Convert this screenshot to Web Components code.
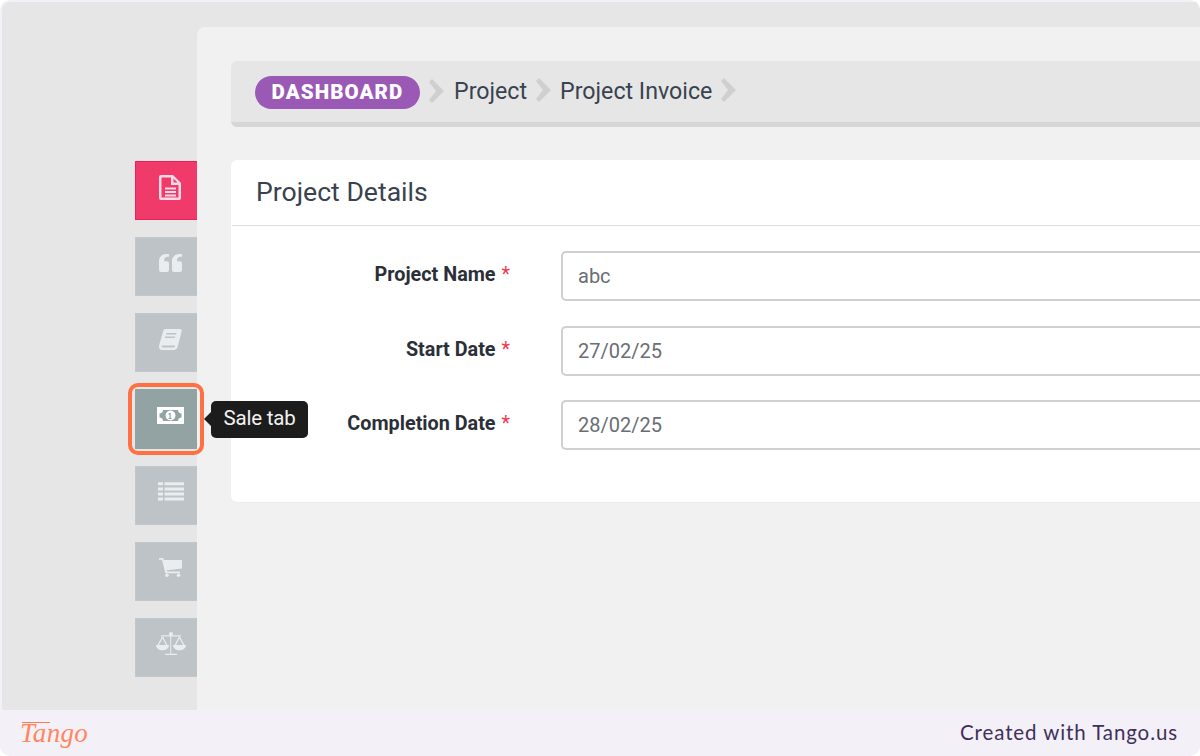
<!doctype html>
<html lang="en">
<head>
<meta charset="utf-8">
<title>Project Invoice</title>
<style>
  html, body { margin: 0; background: #fff; }
</style>
</head>
<body>
<tango-shot>
  <side-rail slot="rail">
    <side-tab icon="file" tone="red"></side-tab>
    <side-tab icon="quote"></side-tab>
    <side-tab icon="book"></side-tab>
    <side-tab icon="money" tone="active" tip="Sale tab"></side-tab>
    <side-tab icon="list"></side-tab>
    <side-tab icon="cart"></side-tab>
    <side-tab icon="scale"></side-tab>
  </side-rail>
  <crumb-bar slot="main">
    <span slot="pill">DASHBOARD</span>
    <crumb-item>Project</crumb-item>
    <crumb-item>Project Invoice</crumb-item>
  </crumb-bar>
  <form-card slot="main" heading="Project Details">
    <form-row label="Project Name" value="abc"></form-row>
    <form-row label="Start Date" value="27/02/25"></form-row>
    <form-row label="Completion Date" value="28/02/25"></form-row>
  </form-card>
</tango-shot>

<script>
const ICONS = {
  file: `<svg width="23" height="25" viewBox="0 0 23 25"><path fill-rule="evenodd" d="M2 0h12l8 8v15a2 2 0 0 1-2 2H2a2 2 0 0 1-2-2V2a2 2 0 0 1 2-2zM2.500 2.500v20h17V10h-7.500V2.500zM14.500 3.500v4h4zM6 12.500h11v2H6zM6 16h11v2H6zM6 19.500h11v2H6z"/></svg>`,
  quote: `<svg width="23" height="18" viewBox="0 2 23 16" preserveAspectRatio="none"><path d="M10 2v2.500H8.500C6.800 4.500 5 5.800 5 7.800V8.500h3a2 2 0 0 1 2 2V16a2 2 0 0 1-2 2H2a2 2 0 0 1-2-2V8C0 4.500 3.500 2 7 2zM23 2v2.500h-1.500C19.800 4.500 18 5.800 18 7.800V8.500h3a2 2 0 0 1 2 2V16a2 2 0 0 1-2 2h-6a2 2 0 0 1-2-2V8c0-3.500 3.500-6 7-6z"/></svg>`,
  book: `<svg width="23" height="21" viewBox="0 0 23 21"><path fill-rule="evenodd" d="M6.500 0H21c1.300 0 2 1 1.700 2.200l-4 15.300C18.300 19.500 17 21 14.500 21H3C1 21 0 19.500 0 17.500c0-.6.100-1.100.2-1.500L4.300 1.800C4.600.7 5.400 0 6.500 0zM7.500 4l-.5 1.500h10L17.500 4zM6.300 7.500l-.5 1.500h10l.5-1.500zM3.500 16.500c-1 0-1.300 2 0 2h11.300c.8 0 1.200-.7 1.400-2z"/></svg>`,
  money: `<svg width="27" height="17" viewBox="0 0 27 17"><path fill-rule="evenodd" d="M0 0h27v17H0zM6 3c0 2-1.500 3.500-3.500 3.500v4C4.500 10.500 6 12 6 14h15c0-2 1.500-3.500 3.500-3.500v-4C22.500 6.500 21 5 21 3z"/><path fill-rule="evenodd" d="M13.500 3.500a5 5 0 1 1 0 10 5 5 0 0 1 0-10zM13 6l-1.700.8.400 1 .8-.4V11h-1v1h3.200v-1h-1V6z"/></svg>`,
  list: `<svg width="26" height="19" viewBox="0 0 26 19"><path d="M0 .3h5v3H0zM6.500 .3H26v3H6.500zM0 5.400h5v3H0zM6.500 5.400H26v3H6.500zM0 10.500h5v3H0zM6.500 10.500H26v3H6.500zM0 15.600h5v3H0zM6.500 15.600H26v3H6.500z"/></svg>`,
  cart: `<svg width="23" height="19" viewBox="0 0 23 19"><path d="M0 0h4.200l.8 2H23v8.500l-15.200 1.800.3 1.200H21v1.700H6.300L3 1.700H0z"/><circle cx="8" cy="17.200" r="1.800"/><circle cx="19.500" cy="17.200" r="1.800"/></svg>`,
  scale: `<svg width="30" height="24" viewBox="0 0 30 24"><path d="M14.200 2.500V21.800H9V23h12v-1.200h-5.800V2.500z"/><path d="M5 3.200h20v1.300H5z"/><circle cx="15" cy="2" r="2"/><path fill="none" stroke="currentColor" stroke-width="1.300" d="M6.500 5 2 13.500M6.500 5l4.500 8.500M23.500 5 19 13.500M23.500 5 28 13.500"/><path d="M0 13h13c0 3.200-2.900 5.300-6.500 5.300S0 16.200 0 13zM17 13h13c0 3.200-2.900 5.300-6.500 5.300S17 16.200 17 13z"/></svg>`
};

class TangoShot extends HTMLElement {
  constructor() {
    super();
    this.attachShadow({ mode: "open" });
    this.shadowRoot.innerHTML = `
      <style>
        :host {
          display: grid;
          grid-template-rows: 1fr 46px;
          grid-template-columns: minmax(0, 1fr);
          width: 1200px;
          height: 756px;
          overflow: hidden;
          box-sizing: border-box;
          padding: 2px 0 0 2px;
          background: #f3f1f7;
          border-radius: 10px;
          font-family: Roboto, "Liberation Sans", sans-serif;
        }
        .stage {
          display: flex;
          min-height: 0;
          background: #e6e6e6;
          border-top-left-radius: 8px;
        }
        .main {
          flex: 1;
          min-width: 0;
          overflow: hidden;
          margin-top: 25px;
          padding: 34px 0 0 34px;
          background: #f1f1f1;
          border-top-left-radius: 8px;
        }
      </style>
      <div class="stage">
        <slot name="rail"></slot>
        <div class="main"><slot name="main"></slot></div>
      </div>
      <tango-footer></tango-footer>
    `;
  }
}

class SideRail extends HTMLElement {
  constructor() {
    super();
    this.attachShadow({ mode: "open" });
    this.shadowRoot.innerHTML = `
      <style>
        :host {
          position: relative;
          z-index: 1;
          display: flex;
          flex-direction: column;
          align-items: flex-end;
          gap: 16.900px;
          box-sizing: border-box;
          flex: none;
          width: 195px;
          padding-top: 159px;
        }
      </style>
      <slot></slot>
    `;
  }
}

class SideTab extends HTMLElement {
  constructor() {
    super();
    this.attachShadow({ mode: "open" });
  }

  connectedCallback() {
    const tip = this.getAttribute("tip");
    const tone = this.getAttribute("tone") || "";
    this.shadowRoot.innerHTML = `
      <style>
        :host {
          position: relative;
          display: grid;
          place-items: center;
          box-sizing: border-box;
          width: 62px;
          height: 59.200px;
          padding: 0 0 7px 8px;
          background: #bdc3c7;
          border: 1px solid #c2c7cb;
          border-right: 0;
          color: #e9edef;
        }
        :host([tone="red"]) {
          background: #f03a6a;
          border-color: #f01f5a;
          color: #fbdbe5;
        }
        :host([tone="active"]) {
          height: 59.700px;
          background: #93a2a2;
          border-color: #93a2a2;
          color: #fff;
        }
        svg { display: block; fill: currentColor; }
        .ring {
          position: absolute;
          inset: -7px -6.500px -7.500px -8px;
          border: 4px solid #ff7043;
          border-radius: 10px;
        }
        .tip {
          position: absolute;
          left: 75px;
          top: 11px;
          padding: 0 12.500px;
          height: 37px;
          line-height: 35px;
          white-space: nowrap;
          background: #1c1c1c;
          border-radius: 5px;
          color: #f2f2f2;
          font-size: 20.500px;
          letter-spacing: -0.200px;
        }
        .tip::before {
          content: "";
          position: absolute;
          left: -7px;
          top: 11px;
          border: 7px solid transparent;
          border-left-width: 0;
          border-right-color: #1c1c1c;
        }
      </style>
      ${ICONS[this.getAttribute("icon")]}
      ${tone === "active" ? `<div class="ring"></div>` : ""}
      ${tip ? `<div class="tip">${tip}</div>` : ""}
    `;
  }
}

class CrumbBar extends HTMLElement {
  constructor() {
    super();
    this.attachShadow({ mode: "open" });
    this.shadowRoot.innerHTML = `
      <style>
        :host {
          display: flex;
          align-items: center;
          box-sizing: border-box;
          width: 1100px;
          height: 66px;
          padding: 2px 0 0 24px;
          background: #e6e6e6;
          border-bottom: 5px solid #d6d6d6;
          border-radius: 6px 0 0 6px;
        }
        .pill {
          display: block;
          box-sizing: border-box;
          height: 33px;
          width: 165px;
          text-align: center;
          line-height: 32px;
          border-radius: 17px;
          background: #9b59b6;
          color: #fff;
          font-size: 20.500px;
          font-weight: 900;
          letter-spacing: 1.100px;
        }
      </style>
      <span class="pill"><slot name="pill"></slot></span>
      <crumb-chev></crumb-chev>
      <slot></slot>
    `;
  }
}

class CrumbChev extends HTMLElement {
  constructor() {
    super();
    this.attachShadow({ mode: "open" });
    this.shadowRoot.innerHTML = `
      <style>
        :host { display: block; flex: none; margin: -4px 10px 0 9px; width: 15px; height: 24px; }
        svg { display: block; }
      </style>
      <svg width="15" height="24" viewBox="0 0 15 24"><path d="M0 3l3-3 12 12-12 12-3-3 7-9z" fill="#cfcfcf"/></svg>
    `;
  }
}

class CrumbItem extends HTMLElement {
  constructor() {
    super();
    this.attachShadow({ mode: "open" });
    this.shadowRoot.innerHTML = `
      <style>
        :host {
          display: flex;
          align-items: center;
          margin-top: -3px;
          color: #39424e;
          font-size: 23.200px;
          white-space: nowrap;
        }
        crumb-chev { position: relative; top: 1px; margin-right: 9px; }
      </style>
      <slot></slot><crumb-chev></crumb-chev>
    `;
  }
}

class FormCard extends HTMLElement {
  constructor() {
    super();
    this.attachShadow({ mode: "open" });
  }

  connectedCallback() {
    this.shadowRoot.innerHTML = `
      <style>
        :host {
          display: block;
          box-sizing: border-box;
          width: 1100px;
          height: 342px;
          margin-top: 33px;
          background: #fff;
          border-radius: 6px 0 0 6px;
          box-shadow: 0 1px 1px #ececec;
        }
        h2 {
          box-sizing: border-box;
          height: 66px;
          margin: 0 0 0 1px;
          padding: 15px 0 0 24px;
          border-bottom: 1px solid #dedede;
          color: #39424e;
          font-size: 26.600px;
          font-weight: 400;
          line-height: 34px;
        }
        .rows {
          display: flex;
          flex-direction: column;
          gap: 24.500px;
          padding-top: 25px;
        }
      </style>
      <h2>${this.getAttribute("heading")}</h2>
      <div class="rows"><slot></slot></div>
    `;
  }
}

class FormRow extends HTMLElement {
  constructor() {
    super();
    this.attachShadow({ mode: "open" });
  }

  connectedCallback() {
    this.shadowRoot.innerHTML = `
      <style>
        :host {
          display: grid;
          grid-template-columns: 279px 1fr;
          column-gap: 51px;
          align-items: start;
        }
        label {
          padding-top: 10px;
          text-align: right;
          color: #2b2f38;
          font-size: 19.800px;
          font-weight: 700;
          line-height: 28px;
          white-space: nowrap;
        }
        label b { margin-left: 1px; color: #f0394f; font-weight: 400; }
        .box {
          box-sizing: border-box;
          height: 50px;
          padding-left: 15px;
          border: 2px solid #d0d0d0;
          border-right: 0;
          border-radius: 5px 0 0 5px;
          color: #6a6e75;
          font-size: 20px;
          line-height: 47px;
        }
      </style>
      <label>${this.getAttribute("label")} <b>*</b></label>
      <div class="box">${this.getAttribute("value")}</div>
    `;
  }
}

class TangoFooter extends HTMLElement {
  constructor() {
    super();
    this.attachShadow({ mode: "open" });
    this.shadowRoot.innerHTML = `
      <style>
        :host {
          display: flex;
          align-items: center;
          justify-content: space-between;
          margin-left: -2px;
          padding: 0 22px 2px 20px;
        }
        .logo {
          position: relative;
          top: 1px;
          color: #ff8660;
          font-family: "Liberation Serif", serif;
          font-size: 27px;
          font-style: italic;
          letter-spacing: 0.300px;
          line-height: 40px;
        }
        .logo::before {
          content: "";
          position: absolute;
          left: 2px;
          top: 9px;
          width: 28px;
          height: 1px;
          background: #ff7a50;
        }
        .made {
          color: #41305a;
          font-family: Lato, "Liberation Sans", sans-serif;
          font-size: 20.500px;
          letter-spacing: 0.900px;
        }
      </style>
      <span class="logo">Tango</span>
      <span class="made">Created with Tango.us</span>
    `;
  }
}

customElements.define("crumb-chev", CrumbChev);
customElements.define("crumb-item", CrumbItem);
customElements.define("crumb-bar", CrumbBar);
customElements.define("side-tab", SideTab);
customElements.define("side-rail", SideRail);
customElements.define("form-row", FormRow);
customElements.define("form-card", FormCard);
customElements.define("tango-footer", TangoFooter);
customElements.define("tango-shot", TangoShot);
</script>
</body>
</html>
